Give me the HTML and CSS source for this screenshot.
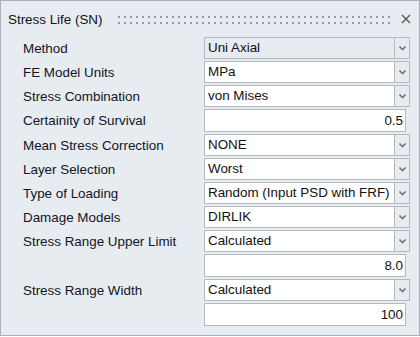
FILE: index.html
```html
<!DOCTYPE html>
<html lang="en">
<head>
  <meta charset="UTF-8">
  <title>Stress Life (SN)</title>
  <link rel="stylesheet" href="styles.css">
</head>
<body>
  <div class="panel">
    <!-- Title bar -->
    <div class="titlebar">
      <span class="title">Stress Life (SN)</span>
      <span class="grip"></span>
      <svg class="close" width="10" height="10" viewBox="0 0 10 10">
        <path d="M1 1 L9 9 M9 1 L1 9" stroke="#555" stroke-width="1.3" fill="none"/>
      </svg>
    </div>

    <!-- Form -->
    <div class="form">
      <label>Method</label>
      <div class="select disabled"><span class="value">Uni Axial</span><span class="arrow"><svg width="7" height="5" viewBox="0 0 7 5"><path d="M0.5 0.5 L3.5 3.5 L6.5 0.5" stroke="#777" stroke-width="1.6" fill="none"/></svg></span></div>

      <label>FE Model Units</label>
      <div class="select"><span class="value">MPa</span><span class="arrow"><svg width="7" height="5" viewBox="0 0 7 5"><path d="M0.5 0.5 L3.5 3.5 L6.5 0.5" stroke="#777" stroke-width="1.6" fill="none"/></svg></span></div>

      <label>Stress Combination</label>
      <div class="select"><span class="value">von Mises</span><span class="arrow"><svg width="7" height="5" viewBox="0 0 7 5"><path d="M0.5 0.5 L3.5 3.5 L6.5 0.5" stroke="#777" stroke-width="1.6" fill="none"/></svg></span></div>

      <label>Certainity of Survival</label>
      <div class="input">0.5</div>

      <label>Mean Stress Correction</label>
      <div class="select"><span class="value">NONE</span><span class="arrow"><svg width="7" height="5" viewBox="0 0 7 5"><path d="M0.5 0.5 L3.5 3.5 L6.5 0.5" stroke="#777" stroke-width="1.6" fill="none"/></svg></span></div>

      <label>Layer Selection</label>
      <div class="select"><span class="value">Worst</span><span class="arrow"><svg width="7" height="5" viewBox="0 0 7 5"><path d="M0.5 0.5 L3.5 3.5 L6.5 0.5" stroke="#777" stroke-width="1.6" fill="none"/></svg></span></div>

      <label>Type of Loading</label>
      <div class="select"><span class="value">Random (Input PSD with FRF)</span><span class="arrow"><svg width="7" height="5" viewBox="0 0 7 5"><path d="M0.5 0.5 L3.5 3.5 L6.5 0.5" stroke="#777" stroke-width="1.6" fill="none"/></svg></span></div>

      <label>Damage Models</label>
      <div class="select"><span class="value">DIRLIK</span><span class="arrow"><svg width="7" height="5" viewBox="0 0 7 5"><path d="M0.5 0.5 L3.5 3.5 L6.5 0.5" stroke="#777" stroke-width="1.6" fill="none"/></svg></span></div>

      <label>Stress Range Upper Limit</label>
      <div class="select"><span class="value">Calculated</span><span class="arrow"><svg width="7" height="5" viewBox="0 0 7 5"><path d="M0.5 0.5 L3.5 3.5 L6.5 0.5" stroke="#777" stroke-width="1.6" fill="none"/></svg></span></div>

      <label></label>
      <div class="input">8.0</div>

      <label>Stress Range Width</label>
      <div class="select"><span class="value">Calculated</span><span class="arrow"><svg width="7" height="5" viewBox="0 0 7 5"><path d="M0.5 0.5 L3.5 3.5 L6.5 0.5" stroke="#777" stroke-width="1.6" fill="none"/></svg></span></div>

      <label></label>
      <div class="input">100</div>
    </div>
  </div>
</body>
</html>
```

FILE: styles.css
```css
/* Global */
* {
  box-sizing: border-box;
  margin: 0;
  padding: 0;
}
body {
  background: #fff;
  font-family: 'Liberation Sans', Arial, sans-serif;
  font-size: 13.4px;
  color: #111;
}
/* Panel */
.panel {
  width: 420px;
  height: 336px;
  background: #e6ecf0;
  border: 1px solid #a9b0b6;
}
.titlebar {
  height: 36px;
  display: flex;
  align-items: center;
  padding: 0 8px 0 7px;
}
.title {
  color: #111;
}
.grip {
  flex: 1;
  height: 9px;
  margin: 0 9px 0 13px;
  background-image: radial-gradient(circle, #939a9f 1px, transparent 1.2px);
  background-size: 6px 6px;
  background-position: 0 -1px;
  background-repeat: repeat;
}
.close {
  display: block;
}
/* Form grid */
.form {
  display: grid;
  grid-template-columns: 181px auto;
  justify-content: start;
  row-gap: 2px;
  padding-left: 22px;
}
.form label {
  display: flex;
  align-items: center;
  color: #141428;
}
.select {
  width: 206px;
  height: 22px;
  display: flex;
  background: #fff;
  border: 1px solid #b3b9be;
}
.select.disabled {
  background: #e6ecf0;
}
.select .value {
  flex: 1;
  padding-left: 3px;
  line-height: 20px;
  white-space: nowrap;
  overflow: hidden;
}
.select .arrow {
  width: 15px;
  border-left: 1px solid #b3b9be;
  background: #e6ecf0;
  display: flex;
  align-items: center;
  justify-content: center;
}
.input {
  width: 202px;
  height: 23px;
  background: #fff;
  border: 1px solid #b3b9be;
  text-align: right;
  padding-right: 2px;
  line-height: 21px;
}
```
